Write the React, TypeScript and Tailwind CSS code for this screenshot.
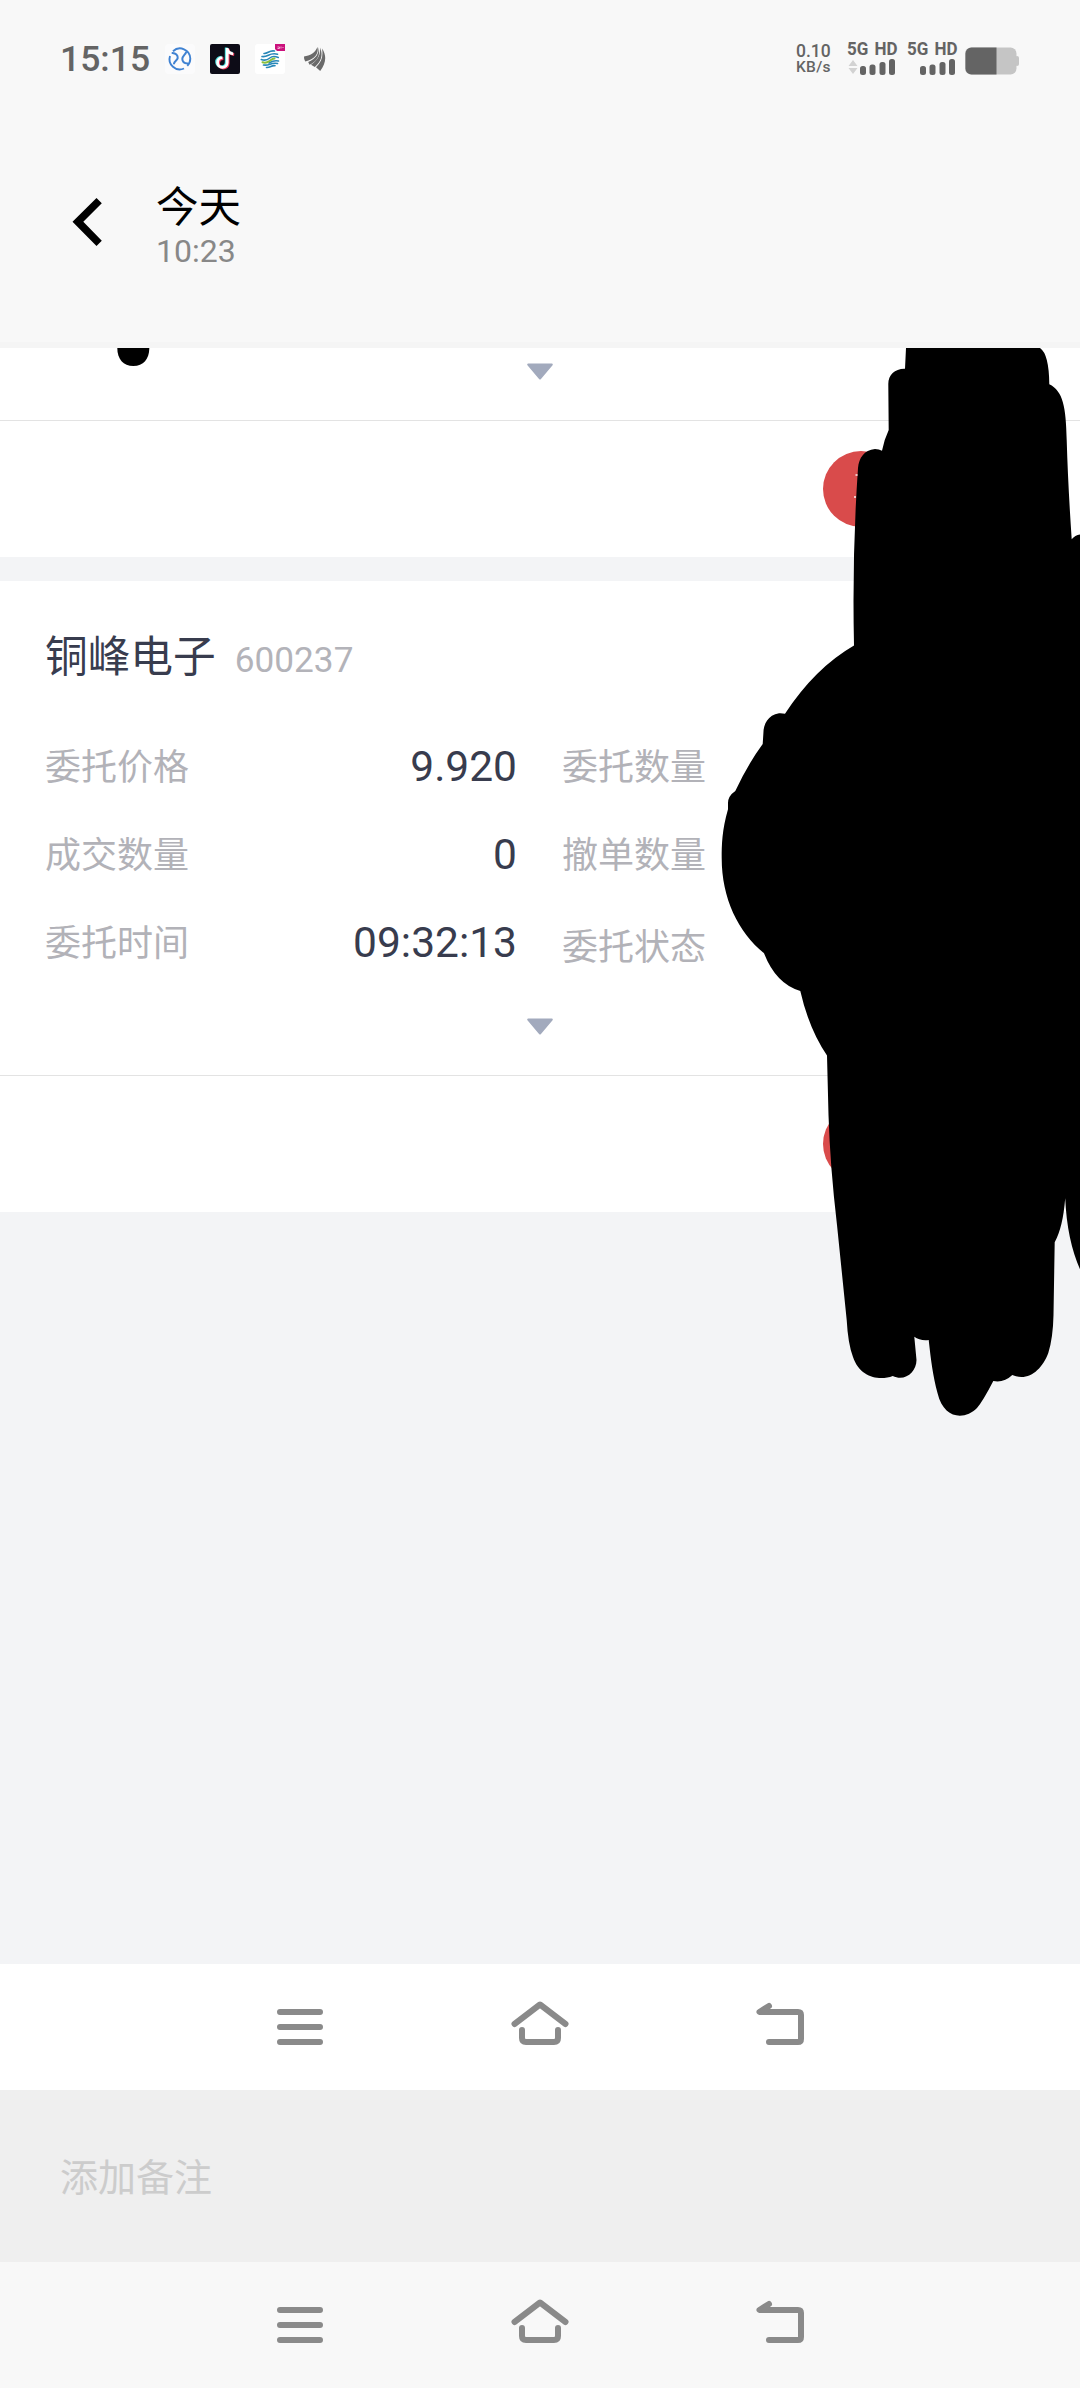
import { clsx } from "clsx";

const details = [
  { left: "委托价格", value: "9.920", right: "委托数量" },
  { left: "成交数量", value: "0", right: "撤单数量" },
  { left: "委托时间", value: "09:32:13", right: "委托状态" },
];

const AppIcons = () => (
  <div className="flex items-center gap-[15px]">
    {/* Blue round logo */}
    <svg className="size-[30px]" viewBox="0 0 30 30" fill="none">
      <rect width="30" height="30" rx="4" fill="#fbfbfc" />
      <path d="M8 7.200A10.300 10.300 0 0 1 25.300 14.500c0 3.500-1.200 5.500-3 7.300M19 24.500A10.300 10.300 0 0 1 5 12" stroke="#3f82d2" strokeWidth="1.900" />
      <path d="M7.500 9c3.200.3 5.500 2.200 5.200 5-.3 2.300-3.200 3.200-3.700 5.500" stroke="#3f82d2" strokeWidth="2" strokeLinecap="round" />
      <path d="M21 8.500c-1 2.300-3.800 3.500-3.700 6.500.1 2.500 2.200 4.300 5.200 4.500" stroke="#3f82d2" strokeWidth="2" strokeLinecap="round" />
    </svg>

    {/* Music note */}
    <svg className="size-[30px]" viewBox="0 0 30 30" fill="none">
      <rect width="30" height="30" rx="2" fill="#0d0c17" />
      <g strokeWidth="2.800">
        <path d="M17.200 4v14.500a4.800 4.800 0 1 1-4.800-4.800M17.200 4.500c.5 3.200 2.500 5 6 5.300" stroke="#4be0e0" transform="translate(-1 -.6)" />
        <path d="M17.200 4v14.500a4.800 4.800 0 1 1-4.800-4.800M17.200 4.500c.5 3.200 2.500 5 6 5.300" stroke="#ee3a5e" transform="translate(1 .8)" />
        <path d="M17.200 4v14.500a4.800 4.800 0 1 1-4.800-4.800M17.200 4.500c.5 3.200 2.500 5 6 5.300" stroke="#fff" />
      </g>
    </svg>

    {/* Carrier app with the small badge */}
    <svg className="size-[30px]" viewBox="0 0 30 30" fill="none">
      <rect width="30" height="30" rx="3" fill="#fff" />
      <g strokeWidth="1.600" strokeLinecap="round">
        <path d="M9 9.500c4 .3 5-3.500 10.500-2.500M7 12.500c6.500 1 7-4.500 15.500-2.300" stroke="#2787b8" />
        <path d="M6.300 15.500c4 1.500 6.500.2 8.500-1.500s4-2.300 8.500-.5" stroke="#2787b8" />
        <path d="M14 19c2.500-1.500 4.500-3 9.500-2" stroke="#2787b8" />
        <path d="M7.500 18.300c3 .9 5 .2 7-1.300s3-2.700 5-2.500" stroke="#8abf3c" strokeWidth="2" />
        <path d="M8.500 21c6.500 1 7-3 14-1.500M11.500 23.500c4 .3 5-2.500 8.500-1.800" stroke="#2787b8" />
      </g>
      <path d="M20 0h10v7h-8l-2-2z" fill="#cb117c" />
      <path d="M22.500 3h2v1.500h-2M26 2.500v2M27.500 3.500h1" stroke="#f3b0d4" />
    </svg>

    {/* Leaf */}
    <svg className="ml-[4px] h-[26px] w-[22px]" viewBox="0 0 22 26" fill="#6a6a6a">
      <path d="M0 10.500C6 9.500 11 7 13.500 1c1.500 7-3 12-12.200 14.500C.4 14 0 12.500 0 10.500Z" />
      <path d="M14.500 1.200c2.300 8.300-1.500 14-9 17.600L4.200 16C12 12.500 15 8 14.500 1.200Z" />
      <path d="M16 1.500c3.700 8 .5 14.500-5.200 19.500L7 18.800C14 14 16.800 8.500 16 1.500Z" />
      <path d="M18 2.500c5 7 4 15-1.800 22.500L12 21.300C17.500 16 19.500 10.500 18 2.500Z" />
    </svg>
  </div>
);

const Signal = ({ arrows }: { arrows?: boolean }) => (
  <div className="flex w-[50px] flex-col">
    <span className="h-[16px] origin-left scale-x-92 whitespace-nowrap text-[18.500px] leading-[13px] font-bold [word-spacing:2px]">
      5G HD
    </span>
    <svg className="h-[16px] w-[50px]" viewBox="0 0 50 16" fill="#646464">
      {arrows && <path d="m1.500 7 4.500-6 4.500 6zM1.500 9h9L6 15z" fill="#d2d2d2" />}
      <rect x="13" y="7" width="6" height="9" rx="2.500" />
      <rect x="22.500" y="5.500" width="6" height="10.500" rx="2.500" />
      <rect x="32.500" y="3" width="6" height="13" rx="2.500" />
      <rect x="42" y="0" width="6" height="16" rx="2.500" />
    </svg>
  </div>
);

const StatusBar = () => (
  <div className="flex h-[118px] items-center justify-between pr-[60px] pl-[60px] text-[#646464]">
    <div className="flex items-center">
      <span className="w-[105px] pt-[2px] text-[35.500px] leading-none font-medium">15:15</span>
      <AppIcons />
    </div>
    <div className="flex items-center">
      <div className="flex w-[51px] flex-col font-medium">
        <span className="text-[17.500px] leading-[17px]">0.10</span>
        <span className="text-[15.500px] leading-[15px] tracking-[0.3px]">KB/s</span>
      </div>
      <div className="flex gap-[10px]">
        <Signal arrows />
        <Signal />
      </div>
      <svg className="mt-[3px] ml-[8px] h-[28px] w-[55px]" viewBox="0 0 55 28">
        <rect x="0" y="0.500" width="51.500" height="27" rx="6" fill="#c5c5c5" />
        <rect x="50" y="9" width="4" height="10" rx="2" fill="#c5c5c5" />
        <path d="M6.500.5h25v27h-25a6 6 0 0 1-6-6v-15a6 6 0 0 1 6-6Z" fill="#646464" />
      </svg>
    </div>
  </div>
);

const Header = () => (
  <header className="h-[348px] border-b-[6px] border-[#f5f5f5] bg-[#f8f8f8]">
    <StatusBar />
    <div className="flex items-start pt-[61px] pl-[72px]">
      <svg className="mt-[18px] h-[50px] w-[30px]" viewBox="0 0 30 50">
        <path d="m24.500 1 5.300 5.200-18.500 18.600 18.500 19-5.300 5.200L.5 24.800Z" />
      </svg>
      <div className="flex flex-col pl-[54px]">
        <h1 className="pt-[4px] text-[42.500px] leading-[50px] text-black">今天</h1>
        <span className="text-[32px] leading-[37px] text-[#888]">10:23</span>
      </div>
    </div>
  </header>
);

const Caret = () => (
  <svg className="h-[18px] w-[28px]" viewBox="0 0 28 18">
    <path d="M2.200 1.500h23.600L14 15.500Z" fill="#a2aabd" stroke="#a2aabd" strokeWidth="2" strokeLinejoin="round" />
  </svg>
);

const Actions = () => (
  <div className="flex h-[137px] items-center border-t border-[#e3e3e3] pl-[823px]">
    <span className="size-[76px] rounded-full bg-[#d94b4b]" />
  </div>
);

const OrderCard = () => (
  <section className="bg-white pt-[39px]">
    <div className="flex h-[72px] items-center pt-[3px] pl-[45px]">
      <h2 className="text-[42.700px] leading-none text-[#383c4e]">铜峰电子</h2>
      <span className="pt-[7px] pl-[19px] text-[35.200px] leading-none text-[#b3b3b9]">600237</span>
    </div>
    <div className="flex flex-col pt-[30px]">
      {details.map((row, i) => (
        <div key={row.left} className="flex h-[88px] items-center">
          <span className="w-[205px] pt-[3px] pl-[45px] text-[36px] leading-none text-[#b2b2b8]">{row.left}</span>
          <span className="w-[312px] pt-[2px] text-right text-[42.500px] leading-none text-[#383c4e]">{row.value}</span>
          <span className={clsx("pl-[45px] text-[36px] leading-none text-[#b2b2b8]", i === 2 ? "pt-[11px]" : "pt-[3px]")}>
            {row.right}
          </span>
        </div>
      ))}
    </div>
    <div className="flex h-[89px] justify-center pt-[32px]">
      <Caret />
    </div>
    <Actions />
  </section>
);

const NavBar = () => (
  <nav className="flex h-[126px] items-center justify-center gap-[180px] pb-[2px]">
    <svg className="size-[60px]" viewBox="0 0 60 60" fill="none" stroke="#8a8a8a" strokeWidth="6" strokeLinecap="round">
      <path d="M10 16h40M10 31h40M10 46h40" />
    </svg>
    <svg className="size-[60px]" viewBox="0 0 60 60" fill="none" stroke="#8a8a8a" strokeWidth="6" strokeLinecap="round" strokeLinejoin="round">
      <path d="M4.500 28 30 8.500l25.500 19.500" />
      <path d="M12 34v8q0 4 4 4h28q4 0 4-4v-8" />
    </svg>
    <svg className="size-[60px]" viewBox="0 0 60 60" fill="none" stroke="#8a8a8a" strokeWidth="6" strokeLinecap="round" strokeLinejoin="round">
      <path d="M19 10 9.500 16H48q3 0 3 3v24q0 3-3 3H19" />
      <path d="M19 10 12 15h5z" fill="#8a8a8a" strokeWidth="3" />
    </svg>
  </nav>
);

// Marker strokes drawn over the private part of the page
const Scribble = () => (
  <svg className="pointer-events-none absolute top-0 left-0 h-[1080px] w-[1080px]" viewBox="0 348 1080 1080">
    <path d="M117.300 348h32c0 11-6 18-16 18s-16-7-16-18Z" />
    <path
      d="M906 348 905 368.800C895 368.500 888.300 375 888.300 384L888.700 430
      Q884 440 882 450.700 Q879 449 875 449C864 450 859 458 858 468
      Q852 555 854 645.500 Q815 668 785 713.700 Q782 713 779 713.200
      C768 715 763.500 724 763.400 733L762.700 744 Q748 764 735.300 791
      Q728 796 728 803V809.300C722 830 721.700 845 721.700 858.300
      C721.700 898 738 932 764 953.300 Q776 984 800.300 991
      Q809 1029 827 1055.500L828.500 1115 Q830 1165 837 1225
      L846.700 1320 Q848 1344 853 1357C860 1378 880 1381 892.700 1376
      C905 1382 916.500 1372 916.500 1360L914.300 1336.700
      Q920 1341 928.700 1340C931 1361 933 1376 937.500 1393
      C944 1420 965 1420 977 1408 Q983 1401 993.300 1381
      Q1004 1383 1012.300 1375C1028 1382 1042 1370 1048.300 1353
      Q1053 1338 1053.500 1315L1054.700 1242.300
      Q1063 1227 1065.200 1198.300 Q1067 1240 1080 1269.300
      V534.500 Q1075 535 1071.700 539.300 Q1068 485 1066.700 440
      C1066 407 1063 391 1049.300 384.300 Q1049 354 1040 348Z"
    />
    <path d="M855.500 474h2v2h-2zM854 496h2v2h-2z" fill="#f4c9c9" />
  </svg>
);

export default function App() {
  return (
    <div className="h-[2388px] w-[1080px] bg-[#f8f8f8] font-[Roboto,'Noto_Sans_CJK_SC',sans-serif]">
      <Header />
      <main className="relative flex h-[1616px] flex-col overflow-hidden bg-[#f3f4f6]">
        <section className="bg-white">
          <div className="flex h-[72px] justify-center pt-[15px]">
            <Caret />
          </div>
          <Actions />
        </section>
        <div className="h-[24px] shrink-0" />
        <OrderCard />
        <Scribble />
      </main>
      <div className="bg-white">
        <NavBar />
      </div>
      <div className="flex h-[172px] items-center bg-[#efefef] pt-[4px] pl-[60px] text-[38px] text-[#ccc]">添加备注</div>
      <NavBar />
    </div>
  );
}
